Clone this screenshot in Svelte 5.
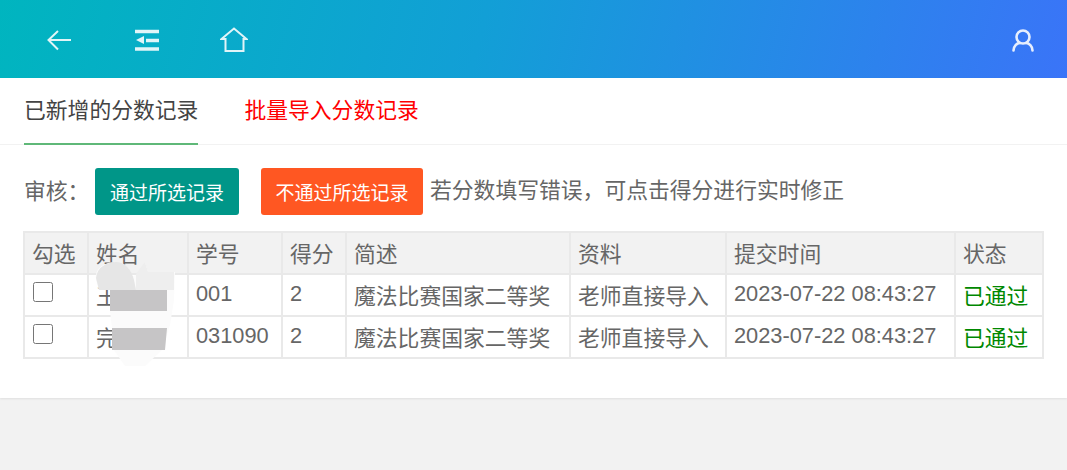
<script lang="ts">
	const columns = [
		{ title: '勾选', width: 64 },
		{ title: '姓名', width: 100 },
		{ title: '学号', width: 94 },
		{ title: '得分', width: 64 },
		{ title: '简述', width: 224 },
		{ title: '资料', width: 156 },
		{ title: '提交时间', width: 229 },
		{ title: '状态', width: 88 },
	];

	const records = [
		{ name: '王', no: '001', score: 2 },
		{ name: '完', no: '031090', score: 2 },
	];
</script>

<div class="page">
	<header class="topbar">
		<div class="nav-left">
			<svg class="icon" viewBox="0 0 28 28" aria-hidden="true">
				<path d="M12 5 L2.5 14 L12 23.5 M2.5 14 H25" />
			</svg>
			<svg class="icon" viewBox="0 0 28 28" aria-hidden="true">
				<path class="thick" d="M2 5.5 H26 M13 14.5 H26 M2 23 H26" />
				<path class="solid" d="M3 14 L11 10 V18 Z" />
			</svg>
			<svg class="icon" viewBox="0 0 28 28" aria-hidden="true">
				<path d="M1.5 13 L14 2.5 L26.5 13 H23.5 V25 H5.5 V13 Z" />
			</svg>
		</div>
		<svg class="icon user" viewBox="0 0 24 24" aria-hidden="true">
			<circle cx="12" cy="9" r="6.5" />
			<path d="M2.5 22.5 C2.5 18 6 15 9 15 M21.5 22.5 C21.5 18 18 15 15 15" />
		</svg>
	</header>

	<main class="panel">
		<nav class="tabs">
			<span class="tab active">已新增的分数记录</span>
			<span class="tab import">批量导入分数记录</span>
		</nav>

		<div class="toolbar">
			<span class="toolbar-label">审核：</span>
			<button class="btn pass">通过所选记录</button>
			<button class="btn reject">不通过所选记录</button>
			<span class="hint">若分数填写错误，可点击得分进行实时修正</span>
		</div>

		<div class="table-wrap">
			<table>
				<colgroup>
					{#each columns as col}
						<col style:width="{col.width}px" />
					{/each}
				</colgroup>
				<thead>
					<tr>
						{#each columns as col}
							<th>{col.title}</th>
						{/each}
					</tr>
				</thead>
				<tbody>
					{#each records as rec}
						<tr>
							<td><input type="checkbox" /></td>
							<td>{rec.name}</td>
							<td>{rec.no}</td>
							<td>{rec.score}</td>
							<td>魔法比赛国家二等奖</td>
							<td>老师直接导入</td>
							<td>2023-07-22 08:43:27</td>
							<td class="ok">已通过</td>
						</tr>
					{/each}
				</tbody>
			</table>

			<!-- redaction smudge over the name column -->
			<svg class="smudge" viewBox="0 0 90 110" aria-hidden="true">
				<path class="white" d="M6 20 C4 6 18 2 26 2 C34 2 40 8 42 16 L50 14 L55 2 L58 12 H85 L84 40 L80 65 L72 90 L55 106 L35 106 L24 90 L22 68 L20 51 L20 30 L9 30 Z" />
				<path class="grey-a" d="M6 18 C7 7 17 2 26 2 C35 2 41 9 44 20 L46 30 H20 L9 30 Z" />
				<path class="grey-c" d="M46 14 L55 2 L58 12 H84 V30 H46 Z" />
				<path class="grey-b" d="M20 30 H77 V51 H20 Z" />
				<path class="grey-b" d="M22 68 H77 L75 90 H22 Z" />
			</svg>
		</div>
	</main>
</div>

<style>
	:global(body) {
		margin: 0;
		background: #f2f2f2;
	}

	.page {
		height: 470px;
		font-family: "Liberation Sans", "Noto Sans CJK SC", sans-serif;
		font-size: 21.8px;
		color: #666;
	}

	.topbar {
		height: 78px;
		box-sizing: border-box;
		padding: 2px 32px 0 46px;
		display: flex;
		align-items: center;
		justify-content: space-between;
		background: linear-gradient(105deg, #00b5bf 0%, #129fd6 45%, #3a74f8 100%);
	}

	.nav-left {
		display: flex;
		align-items: center;
		gap: 59px;
	}

	.icon {
		width: 28px;
		height: 28px;
		fill: none;
		stroke: #fff;
		stroke-width: 2;
		opacity: 0.88;
	}

	.icon .thick {
		stroke-width: 3.4;
	}

	.icon .solid {
		fill: #fff;
		stroke: none;
	}

	.user {
		width: 24px;
		height: 24px;
		stroke-width: 2.6;
		stroke-linecap: round;
	}

	.panel {
		height: 320px;
		background: #fff;
		box-shadow: 0 1px 2px rgba(0, 0, 0, 0.08);
	}

	.tabs {
		height: 67px;
		box-sizing: border-box;
		padding-left: 24px;
		display: flex;
		gap: 46px;
		border-bottom: 1px solid #f2f2f2;
	}

	.tab {
		height: 67px;
		box-sizing: border-box;
		line-height: 66px;
		white-space: nowrap;
	}

	.tab.active {
		color: #444;
		border-bottom: 2px solid #5fb878;
	}

	.tab.import {
		color: #f00;
	}

	.toolbar {
		height: 86px;
		box-sizing: border-box;
		padding: 23px 0 0 24px;
		display: flex;
		align-items: flex-start;
	}

	.toolbar-label {
		width: 71px;
		line-height: 47px;
		white-space: nowrap;
	}

	.hint {
		line-height: 46px;
		margin-left: 7px;
		white-space: nowrap;
	}

	.btn {
		height: 47px;
		border: 0;
		border-radius: 3px;
		padding: 0;
		color: #fff;
		font: inherit;
		font-size: 19px;
		white-space: nowrap;
	}

	.pass {
		width: 144px;
		background: #009688;
	}

	.reject {
		width: 162px;
		margin-left: 22px;
		background: #ff5722;
	}

	.table-wrap {
		position: relative;
		margin-left: 23px;
		width: 1020px;
	}

	table {
		width: 1020px;
		table-layout: fixed;
		border-collapse: collapse;
	}

	th,
	td {
		height: 42px;
		box-sizing: border-box;
		padding: 0 0 2px 7px;
		border: 2px solid #e9e9e9;
		text-align: left;
		font-weight: 400;
		white-space: nowrap;
		overflow: hidden;
	}

	th {
		background: #f2f2f2;
	}

	input[type="checkbox"] {
		width: 20px;
		height: 20px;
		margin: 0 0 5px 1px;
		vertical-align: middle;
	}

	.ok {
		color: #080;
	}

	.smudge {
		position: absolute;
		left: 67px;
		top: 29px;
		width: 90px;
		height: 110px;
	}

	.smudge .white {
		fill: #fbfbfb;
	}

	.smudge .grey-a {
		fill: #e6e6e6;
	}

	.smudge .grey-b {
		fill: #c6c5c6;
	}

	.smudge .grey-c {
		fill: #eeeeee;
	}
</style>
